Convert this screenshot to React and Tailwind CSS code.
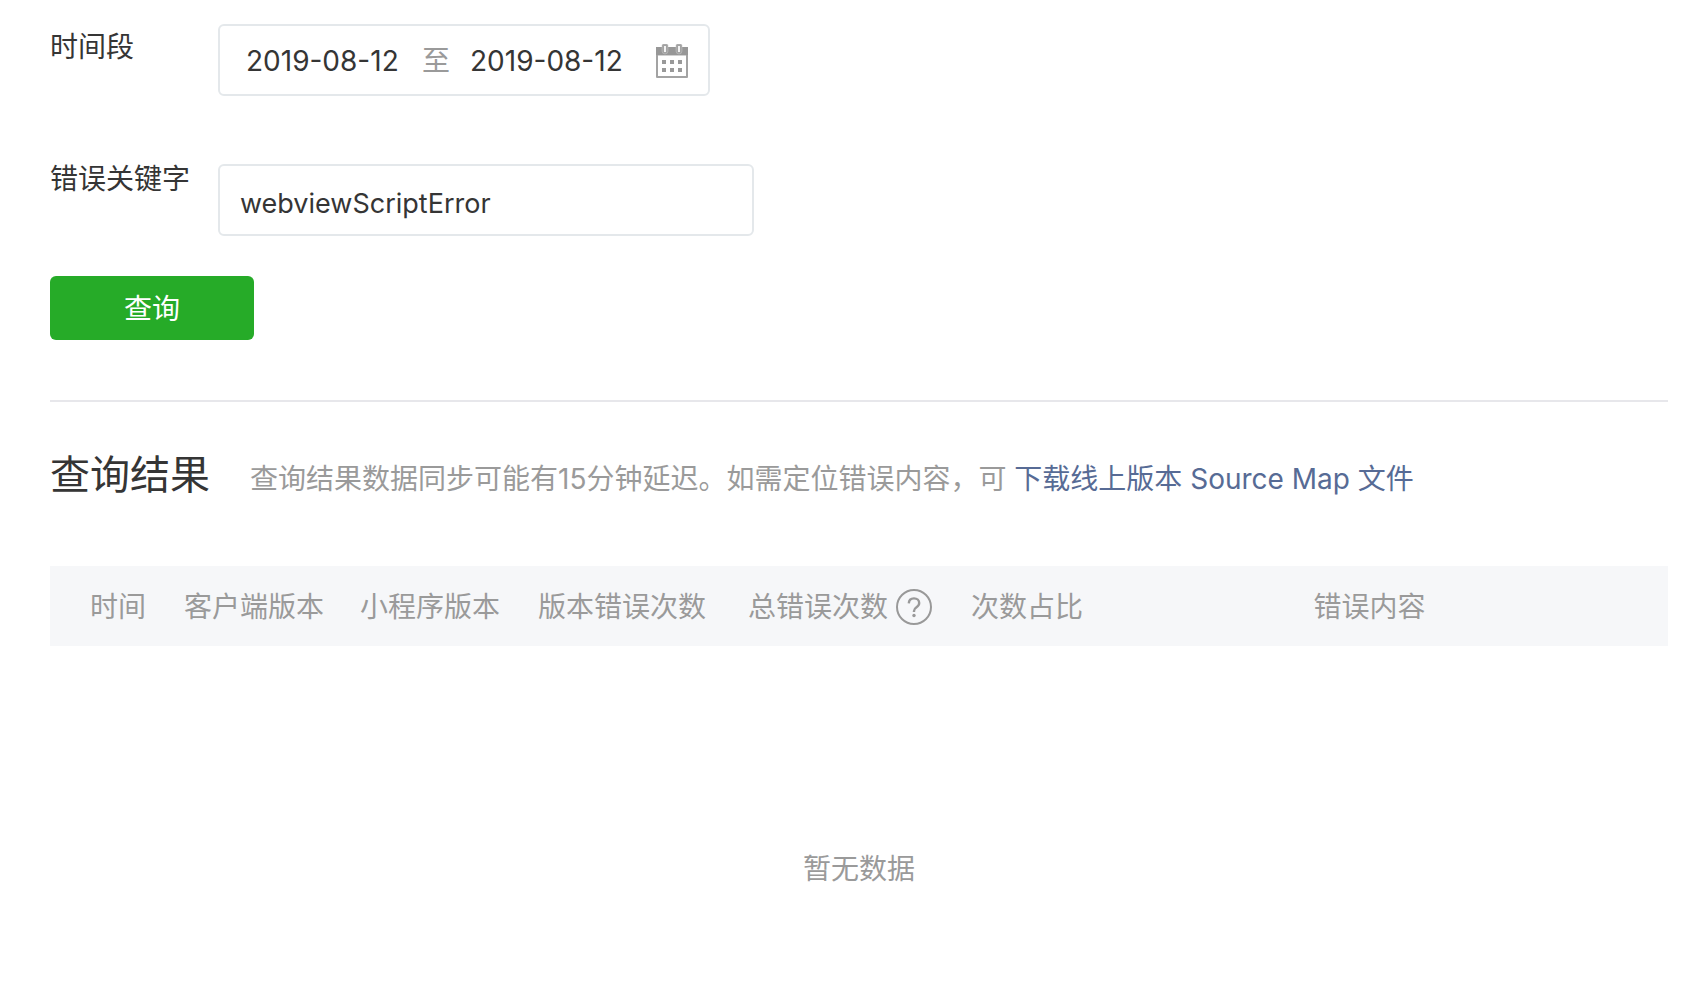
import { useState } from "react";

const columns = [
    { title: "时间", className: "w-[134px] pl-10 text-left" },
    { title: "客户端版本", className: "w-[176px] text-left" },
    { title: "小程序版本", className: "w-[178px] text-left" },
    { title: "版本错误次数", className: "w-[210px] text-left" },
    { title: "总错误次数", className: "w-[223px] text-left", help: true },
    { title: "次数占比", className: "w-[140px] text-left" },
    { title: "错误内容", className: "pr-10 text-center" },
];

function CalendarIcon() {
    return (
        <svg width="32" height="34" viewBox="0 0 32 34" fill="none">
            <path d="M0 3h32v30a1 1 0 0 1-1 1H1a1 1 0 0 1-1-1z" fill="#a3a3a3" />
            <path d="M0 3h32v8H0z" fill="#979797" />
            <path d="M2 11.5h28V32H2z" fill="#fff" />
            <path
                d="M7.500 0h3A1.500 1.500 0 0 1 12 1.500V7a3 3 0 0 1-6 0V1.500A1.500 1.500 0 0 1 7.500 0zM21.500 0h3A1.500 1.500 0 0 1 26 1.500V7a3 3 0 0 1-6 0V1.500A1.500 1.500 0 0 1 21.500 0z"
                fill="#a3a3a3"
                stroke="#c4c4c4"
                strokeWidth="0.5"
            />
            <path d="M8 2h2v6H8zM22 2h2v6h-2z" fill="#f2f2f2" />
            <path
                d="M6 16h4v4H6zM14 16h4v4h-4zM22 16h4v4h-4zM6 24h4v4H6zM14 24h4v4h-4zM22 24h4v4h-4z"
                fill="#999"
            />
        </svg>
    );
}

function HelpIcon() {
    return (
        <svg width="36" height="36" viewBox="0 0 36 36" fill="none" stroke="#999" strokeWidth="2">
            <circle cx="18" cy="18" r="17" />
            <path
                d="M12.8 14.4c.1-3 2.2-5 5.2-5s5.2 1.9 5.2 4.6c0 2-1 3.1-2.7 4.2-1.8 1.2-2.5 2-2.5 3.7V23"
                strokeWidth="2.4"
            />
            <circle cx="18" cy="26.5" r="1.7" fill="#999" stroke="none" />
        </svg>
    );
}

export default function App() {
    const [start, setStart] = useState("2019-08-12");
    const [end, setEnd] = useState("2019-08-12");
    const [keyword, setKeyword] = useState("webviewScriptError");

    const onSearch = (e) => {
        e.preventDefault();
    };

    return (
        <main className="min-h-screen bg-white pt-6 pl-[50px] pr-[30px] font-[Inter,'Noto_Sans_CJK_SC',sans-serif] text-[28px] leading-[46px] text-[#353535]">
            <form onSubmit={onSearch}>
                {/* Date range */}
                <div className="flex items-start">
                    <label htmlFor="start" className="w-[168px] shrink-0">
                        时间段
                    </label>
                    <div className="flex h-[72px] w-[492px] items-center rounded-md border-2 border-[#e4e8eb] pt-0.5 pr-5 pl-[26px]">
                        <input
                            id="start"
                            type="text"
                            value={start}
                            onChange={(e) => setStart(e.target.value)}
                            className="w-[156px] outline-none"
                        />
                        <label htmlFor="end" className="mx-5 text-[#9a9a9a]">
                            至
                        </label>
                        <input
                            id="end"
                            type="text"
                            value={end}
                            onChange={(e) => setEnd(e.target.value)}
                            className="w-[156px] outline-none"
                        />
                        <button type="button" aria-label="选择日期" className="ml-auto">
                            <CalendarIcon />
                        </button>
                    </div>
                </div>
                {/* Keyword */}
                <div className="mt-[60px] flex items-start">
                    <label htmlFor="keyword" className="w-[168px] shrink-0">
                        错误关键字
                    </label>
                    <input
                        id="keyword"
                        type="text"
                        value={keyword}
                        onChange={(e) => setKeyword(e.target.value)}
                        className="mt-2 h-[72px] w-[536px] rounded-md border-2 border-[#e4e8eb] px-5 pt-1.5 text-[27px] outline-none"
                    />
                </div>
                <button
                    type="submit"
                    className="mt-10 flex h-16 w-[204px] items-center justify-center rounded-md bg-[#26ab28] pt-0.5 text-white"
                >
                    查询
                </button>
            </form>

            {/* Result */}
            <section className="mt-[60px] border-t-2 border-[#e7e7eb] pt-10">
                <div className="flex items-baseline">
                    <h2 className="mr-10 text-[40px] leading-[66px]">查询结果</h2>
                    <p className="text-[#9a9a9a]">
                        查询结果数据同步可能有15分钟延迟。如需定位错误内容，可{" "}
                        <a href="#source-map" className="text-[#576b95]">
                            下载线上版本 Source Map 文件
                        </a>
                    </p>
                </div>
                <table className="mt-[58px] w-full table-fixed text-[#9a9a9a]">
                    <thead>
                        <tr className="h-20 bg-[#f6f7f9]">
                            {columns.map((col) => (
                                <th key={col.title} className={`pt-0.5 font-normal ${col.className}`}>
                                    {col.help ? (
                                        <span className="flex items-center gap-2">
                                            {col.title}
                                            <HelpIcon />
                                        </span>
                                    ) : (
                                        col.title
                                    )}
                                </th>
                            ))}
                        </tr>
                    </thead>
                    <tbody>
                        <tr>
                            <td colSpan={7} className="pt-[200px] text-center">
                                暂无数据
                            </td>
                        </tr>
                    </tbody>
                </table>
            </section>
        </main>
    );
}
